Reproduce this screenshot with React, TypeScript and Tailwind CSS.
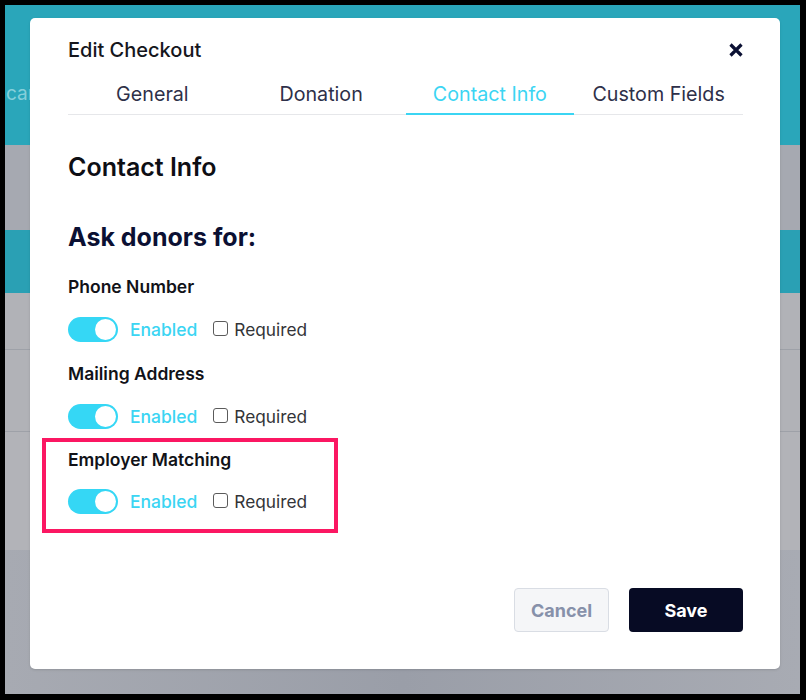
import React from "react";

const font = { fontFamily: "Inter, 'Noto Sans', sans-serif" };

function Toggle() {
  return (
    <div className="flex h-[25px] w-[50px] items-center justify-end rounded-full bg-[#35d7f5] pr-[2px]">
      <div className="h-[21px] w-[21px] rounded-full bg-white" />
    </div>
  );
}

function OptionRow() {
  return (
    <div className="flex items-center">
      <Toggle />
      <span className="ml-[12px] text-[17.5px] leading-[24px] font-medium text-[#3bd5f3]">Enabled</span>
      <span className="ml-[16px] mb-[3px] h-[15px] w-[15px] rounded-[3px] border border-[#5b5b5b] bg-white" />
      <span className="ml-[6px] text-[17.3px] leading-[24px] text-[#333438]">Required</span>
    </div>
  );
}

function Label({ children }: { children: React.ReactNode }) {
  return <div className="text-[17.5px] leading-[24px] font-semibold text-[#111218]">{children}</div>;
}

function Field({ label }: { label: string }) {
  return (
    <div>
      <Label>{label}</Label>
      <div className="mt-[18px]">
        <OptionRow />
      </div>
    </div>
  );
}

export default function App() {
  const tabs = ["General", "Donation", "Contact Info", "Custom Fields"];
  return (
    <div className="h-[700px] w-[806px] bg-black pt-[5px] pl-[5px] pr-[6px] pb-[6px]" style={font}>
      <div className="relative h-full w-full overflow-hidden">
        {/* background page */}
        <div className="flex h-full flex-col">
          <div className="h-[140px] bg-[#2aa6ba] pl-[1px] pt-[77px]">
            <span className="text-[19px] leading-[24px] text-[#86cfdb]">car</span>
          </div>
          <div className="h-[85px] bg-[#a6a9b1]" />
          <div className="h-[63px] bg-[#2aa0b4]" />
          <div className="h-[57px] border-b border-[#9ea1a8] bg-[#b1b2b7]" />
          <div className="h-[82px] border-b border-[#9ea1a8] bg-[#b1b2b7]" />
          <div className="h-[118px] bg-[#b2b3b8]" />
          <div className="flex-1 bg-gradient-to-r from-[#a7aab2] via-[#9a9ea8] to-[#a8abb3]" />
        </div>

        {/* modal */}
        <div className="absolute left-[25px] top-[13px] h-[651px] w-[750px] rounded-[5px] bg-white pl-[38px] pr-[37px] pt-[20px] shadow-sm">
          <div className="flex items-center justify-between">
            <span className="text-[20px] leading-[24px] font-medium text-[#15161c]">Edit Checkout</span>
            <svg width="16" height="16" viewBox="0 0 16 16" className="mr-[-1px]">
              <path d="M2.5 2.5 L13.5 13.5 M13.5 2.5 L2.5 13.5" stroke="#0b1033" strokeWidth="3.2" strokeLinecap="butt" />
            </svg>
          </div>

          <div className="mt-[20px] grid grid-cols-4 border-b border-[#e6e7ea]">
            {tabs.map((t) => (
              <div
                key={t}
                className={
                  t === "Contact Info"
                    ? "-mb-px border-b-2 border-[#3bd5f3] pb-[7px] text-center text-[19.7px] leading-[24px] text-[#3bd5f3]"
                    : "-mb-px border-b-2 border-transparent pb-[7px] text-center text-[19.7px] leading-[24px] text-[#2e3049]"
                }
              >
                {t}
              </div>
            ))}
          </div>

          <div className="mt-[36px] text-[25px] leading-[32px] font-semibold text-[#0d0e14]">Contact Info</div>
          <div className="mt-[38px] text-[25px] leading-[32px] font-bold text-[#0b1033]">Ask donors for:</div>

          <div className="mt-[22px]">
            <Field label="Phone Number" />
          </div>
          <div className="mt-[20px]">
            <Field label="Mailing Address" />
          </div>
          <div className="relative mt-[19px]">
            <div className="pointer-events-none absolute left-[-26px] top-[-10px] h-[95px] w-[296px] border-[4px] border-[#fb1762]" />
            <Label>Employer Matching</Label>
            <div className="mt-[17px]">
              <OptionRow />
            </div>
          </div>

          <div className="mt-[74px] flex justify-end gap-[20px]">
            <button className="h-[44px] w-[95px] rounded-[4px] border border-[#d9dde4] bg-[#f5f6f8] text-[18px] font-bold text-[#8791aa]">
              Cancel
            </button>
            <button className="h-[44px] w-[114px] rounded-[4px] bg-[#070b24] text-[18px] font-bold text-white">
              Save
            </button>
          </div>
        </div>
      </div>
    </div>
  );
}
